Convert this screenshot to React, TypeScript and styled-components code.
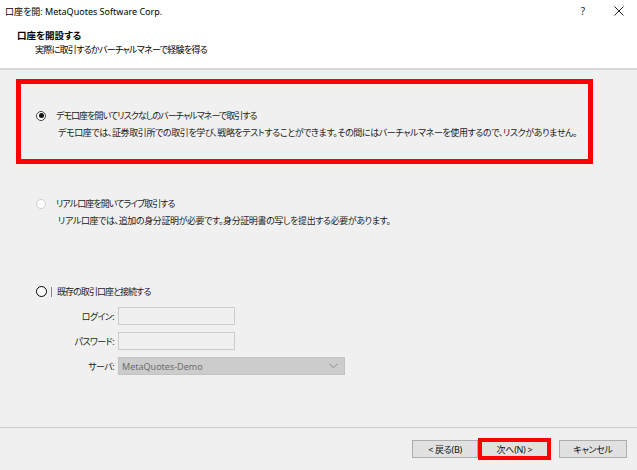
import React from "react";
import styled, { createGlobalStyle, css } from "styled-components";

const Global = createGlobalStyle`
  html, body { margin: 0; padding: 0; }
  body {
    width: 637px;
    height: 470px;
    overflow: hidden;
    font-family: "Noto Sans", "Noto Sans CJK JP", sans-serif;
    font-feature-settings: "palt";
    color: #1b1b1b;
    background: #f0f0f0;
  }
`;

const Window = styled.div`
  width: 637px;
  height: 470px;
  display: flex;
  flex-direction: column;
  background: #f0f0f0;
`;

const TitleBar = styled.div`
  height: 22px;
  display: flex;
  align-items: center;
  padding-left: 5px;
  background: #ffffff;
  font-size: 9px;
  color: #000;
`;

const TitleText = styled.span`
  flex: 1;
`;

const TitleButton = styled.span`
  width: 36px;
  display: flex;
  justify-content: center;
  align-items: center;
  font-size: 10px;
  color: #222;
`;

const Header = styled.div`
  background: #ffffff;
  padding: 7px 0 11px 17px;
  border-bottom: 2px solid #d6d6d6;
  display: flex;
  flex-direction: column;
`;

const HeaderTitle = styled.div`
  font-size: 9.5px;
  font-weight: 700;
  line-height: 14px;
  color: #000;
`;

const HeaderSub = styled.div`
  font-size: 9px;
  letter-spacing: -0.7px;
  line-height: 14px;
  padding-left: 18px;
  color: #000;
`;

const Body = styled.div`
  flex: 1;
  display: flex;
  flex-direction: column;
  gap: 3px;
  padding: 9px 44px 0 16px;
`;

const OptionBox = styled.div<{ $highlighted?: boolean }>`
  box-sizing: border-box;
  height: 85px;
  border: 5px solid ${(p) => (p.$highlighted ? "#ff0000" : "transparent")};
  padding: 23px 0 0 15px;
  display: flex;
  flex-direction: column;
`;

const OptionRow = styled.div`
  display: flex;
  align-items: center;
  height: 17px;
`;

const Radio = styled.span<{ $state: "checked" | "disabled" | "focus" }>`
  box-sizing: border-box;
  width: 10px;
  height: 10px;
  border-radius: 50%;
  flex: none;
  display: flex;
  align-items: center;
  justify-content: center;
  background: #fff;
  ${(p) =>
    p.$state === "checked" &&
    css`
      border: 1px solid #444;
      &::after {
        content: "";
        width: 5px;
        height: 5px;
        border-radius: 50%;
        background: #111;
      }
    `}
  ${(p) =>
    p.$state === "disabled" &&
    css`
      border: 1px solid #cfcfcf;
    `}
  ${(p) =>
    p.$state === "focus" &&
    css`
      width: 11px;
      height: 11px;
      border: 1px solid #000;
    `}
`;

const Label = styled.span<{ $gap?: number }>`
  margin-left: ${(p) => p.$gap ?? 10}px;
  font-size: 9px;
  letter-spacing: -0.95px;
  line-height: 17px;
  white-space: nowrap;
  color: #1b1b1b;
`;

const FocusMark = styled.span`
  width: 0;
  height: 10px;
  border-left: 1px solid #888;
  margin-left: 4px;
`;

const Description = styled.div`
  margin-left: 22px;
  font-size: 9px;
  letter-spacing: -0.4px;
  word-spacing: 0;
  line-height: 17px;
  white-space: nowrap;
  color: #1b1b1b;
`;

const Form = styled.div`
  display: grid;
  grid-template-columns: 78px auto;
  column-gap: 4px;
  row-gap: 7px;
  margin-top: 7px;
  align-items: center;
`;

const FieldLabel = styled.span`
  text-align: right;
  font-size: 9px;
  letter-spacing: -0.6px;
  color: #1b1b1b;
  white-space: nowrap;
`;

const TextField = styled.div`
  box-sizing: border-box;
  width: 117px;
  height: 18px;
  border: 1px solid #cccccc;
  background: #f0f0f0;
`;

const SelectField = styled.div`
  box-sizing: border-box;
  width: 227px;
  height: 18px;
  border: 1px solid #c2c2c2;
  background: #cccccc;
  display: flex;
  align-items: center;
  justify-content: space-between;
  padding: 0 6px 0 3px;
  font-size: 9px;
  color: #6d6d6d;
`;

const Footer = styled.div`
  height: 43px;
  box-sizing: border-box;
  border-top: 1px solid #cfcfcf;
  display: flex;
  justify-content: flex-end;
  align-items: center;
  padding-right: 10px;
`;

const Button = styled.div<{ $w: number }>`
  box-sizing: border-box;
  width: ${(p) => p.$w}px;
  height: 18px;
  border: 1px solid #adadad;
  background: #e1e1e1;
  display: flex;
  align-items: center;
  justify-content: center;
  font-size: 9px;
  letter-spacing: -0.3px;
  color: #111;
  white-space: nowrap;
`;

const Highlight = styled.div`
  box-sizing: border-box;
  width: 73px;
  height: 22px;
  border: 4px solid #ff0000;
  background: #e1e1e1;
  display: flex;
  align-items: center;
  justify-content: center;
  font-size: 9px;
  letter-spacing: -0.3px;
  color: #111;
  margin-right: 8px;
`;

export default function App() {
  return (
    <>
      <Global />
      <Window>
        <TitleBar>
          <TitleText>口座を開: MetaQuotes Software Corp.</TitleText>
          <TitleButton>?</TitleButton>
          <TitleButton>
            <svg width="10" height="10" viewBox="0 0 10 10">
              <path d="M0.5 0.5 L9.5 9.5 M9.5 0.5 L0.5 9.5" stroke="#222" strokeWidth="1" />
            </svg>
          </TitleButton>
        </TitleBar>
        <Header>
          <HeaderTitle>口座を開設する</HeaderTitle>
          <HeaderSub>実際に取引するかバーチャルマネーで経験を得る</HeaderSub>
        </Header>
        <Body>
          <OptionBox $highlighted>
            <OptionRow>
              <Radio $state="checked" />
              <Label>デモ口座を開いてリスクなしのバーチャルマネーで取引する</Label>
            </OptionRow>
            <Description>
              デモ口座では、証券取引所での取引を学び、戦略をテストすることができます。その間にはバーチャルマネーを使用するので、リスクがありません。
            </Description>
          </OptionBox>
          <OptionBox>
            <OptionRow>
              <Radio $state="disabled" />
              <Label>リアル口座を開いてライブ取引する</Label>
            </OptionRow>
            <Description>
              リアル口座では、追加の身分証明が必要です。身分証明書の写しを提出する必要があります。
            </Description>
          </OptionBox>
          <OptionBox>
            <OptionRow>
              <Radio $state="focus" />
              <FocusMark />
              <Label $gap={5}>既存の取引口座と接続する</Label>
            </OptionRow>
            <Form>
              <FieldLabel>ログイン:</FieldLabel>
              <TextField />
              <FieldLabel>パスワード:</FieldLabel>
              <TextField />
              <FieldLabel>サーバ:</FieldLabel>
              <SelectField>
                <span>MetaQuotes-Demo</span>
                <svg width="9" height="6" viewBox="0 0 9 6">
                  <path d="M0.5 0.8 L4.5 4.8 L8.5 0.8" fill="none" stroke="#8a8a8a" strokeWidth="1" />
                </svg>
              </SelectField>
            </Form>
          </OptionBox>
        </Body>
        <Footer>
          <Button $w={66}>&lt; 戻る(B)</Button>
          <Highlight>次へ(N) &gt;</Highlight>
          <Button $w={68}>キャンセル</Button>
        </Footer>
      </Window>
    </>
  );
}
